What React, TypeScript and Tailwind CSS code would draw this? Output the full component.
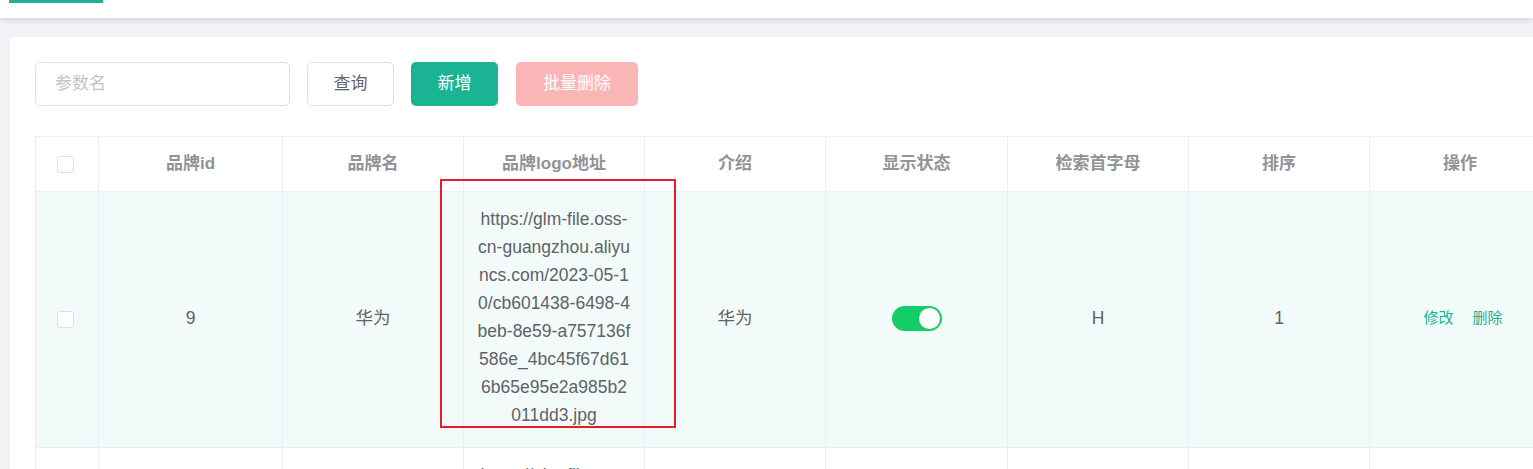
import { useState } from "react";

const cols = "grid-cols-[63px_184px_181px_181px_181px_182px_181px_181px_181px]";

const rows = [
  {
    id: 9,
    name: "华为",
    logo: "https://glm-file.oss-cn-guangzhou.aliyuncs.com/2023-05-10/cb601438-6498-4beb-8e59-a757136f586e_4bc45f67d616b65e95e2a985b2011dd3.jpg",
    desc: "华为",
    show: true,
    letter: "H",
    sort: 1,
    hover: true,
  },
  {
    id: 10,
    name: "小米",
    logo: "https://glm-file.oss-cn-guangzhou.aliyuncs.com/2023-05-10/8f3a1c52-2b7e-4d61-9a0c-5e4f1b2d7c9a_1f2e3d4c5b6a79808a7b6c5d4e3f2a1b.jpg",
    desc: "小米",
    show: true,
    letter: "X",
    sort: 2,
    hover: false,
  },
];

function Checkbox() {
  return <span className="block w-[17px] h-[17px] rounded-[3px] border border-[#dcdfe6] bg-white" />;
}

function Switch({ on }: { on: boolean }) {
  return (
    <span className={`relative inline-block w-[50px] h-[25px] rounded-full ${on ? "bg-[#13ce66]" : "bg-[#dcdfe6]"}`}>
      <span className={`absolute top-[2px] w-[21px] h-[21px] rounded-full bg-white ${on ? "right-[2px]" : "left-[2px]"}`} />
    </span>
  );
}

export default function App() {
  const [keyword, setKeyword] = useState("");

  return (
    <div
      className="relative w-screen h-[469px] overflow-hidden bg-[#f0f2f5] text-[#606266]"
      style={{ fontFamily: '"Liberation Sans", "Noto Sans CJK SC", sans-serif' }}
    >
      {/* tab bar, scrolled up */}
      <div className="relative z-10 h-[18px] bg-white shadow-[0_2px_6px_rgba(0,0,0,0.12)] overflow-hidden">
        <div className="ml-[9px] w-[94px] h-[18px] border-b-[3px] border-[#1ab394]">
          <div className="-mt-[15px] text-[17px] leading-[18px] text-[#1ab394]">品牌管理</div>
        </div>
      </div>

      <div className="pl-[10px] pt-[19px]">
        <div className="w-[1565px] bg-white rounded-[4px] px-[25px] pt-[25px]">
          {/* toolbar */}
          <div className="flex items-center text-[17px]">
            <input
              value={keyword}
              onChange={(e) => setKeyword(e.target.value)}
              placeholder="参数名"
              className="w-[255px] h-[44px] rounded-[5px] border border-[#dcdfe6] px-[19px] outline-none placeholder:text-[#c0c4cc]"
            />
            <button className="ml-[17px] w-[87px] h-[44px] rounded-[5px] border border-[#dcdfe6] bg-white text-[#606266]">
              查询
            </button>
            <button className="ml-[17px] w-[87px] h-[44px] rounded-[5px] bg-[#1ab394] text-white">
              新增
            </button>
            <button className="ml-[18px] w-[122px] h-[44px] rounded-[5px] bg-[#fab6b6] text-white">
              批量删除
            </button>
          </div>

          {/* table */}
          <div className="mt-[30px] border-t border-l border-[#ebeef5]">
            <div className={`grid ${cols} h-[55px] text-[17px] font-bold text-[#909399]`}>
              <div className="flex items-center justify-center pr-[4px] border-r border-b border-[#ebeef5]">
                <Checkbox />
              </div>
              {["品牌id", "品牌名", "品牌logo地址", "介绍", "显示状态", "检索首字母", "排序", "操作"].map((h) => (
                <div key={h} className="flex items-center justify-center border-r border-b border-[#ebeef5]">
                  {h}
                </div>
              ))}
            </div>

            {rows.map((r) => (
              <div key={r.id} className={`grid ${cols} text-[17.5px] ${r.hover ? "bg-[#f3fbfa]" : "bg-white"}`}>
                <div className="flex items-center justify-center pr-[4px] border-r border-b border-[#ebeef5]">
                  <Checkbox />
                </div>
                <div className="flex items-center justify-center pb-[2px] border-r border-b border-[#ebeef5]">{r.id}</div>
                <div className="flex items-center justify-center pb-[2px] border-r border-b border-[#ebeef5]">{r.name}</div>
                <div className="flex items-center justify-center border-r border-b border-[#ebeef5] pt-[13px] pb-[18px]">
                  <div className="w-[153px] text-center leading-[28px] break-all">{r.logo}</div>
                </div>
                <div className="flex items-center justify-center pb-[2px] border-r border-b border-[#ebeef5]">{r.desc}</div>
                <div className="flex items-center justify-center pb-[2px] border-r border-b border-[#ebeef5]">
                  <Switch on={r.show} />
                </div>
                <div className="flex items-center justify-center pb-[2px] border-r border-b border-[#ebeef5]">{r.letter}</div>
                <div className="flex items-center justify-center pb-[2px] border-r border-b border-[#ebeef5]">{r.sort}</div>
                <div className="flex items-center justify-center gap-[19px] pb-[2px] border-r border-b border-[#ebeef5] text-[15px] text-[#1ab394] pl-[6px]">
                  <button>修改</button>
                  <button>删除</button>
                </div>
              </div>
            ))}
          </div>
        </div>
      </div>

      {/* red annotation box */}
      <div className="absolute left-[440px] top-[179px] w-[236px] h-[249px] border-2 border-[#e81c24] pointer-events-none" />
    </div>
  );
}
